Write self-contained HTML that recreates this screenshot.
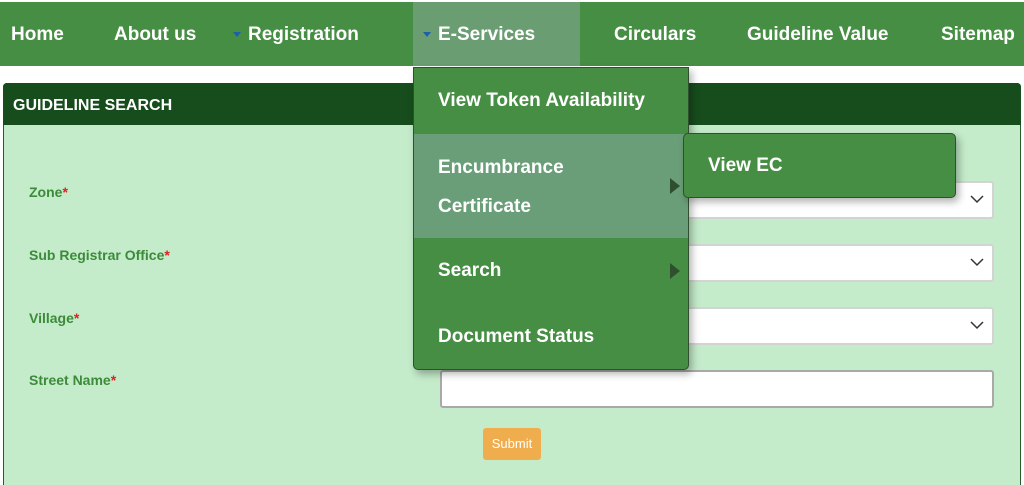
<!DOCTYPE html><html style="overflow:hidden;height:485px"><head><style>
body{margin:0;width:1024px;height:485px;overflow:hidden;background:#fff;font-family:"Liberation Sans",sans-serif;position:relative}
.a{position:absolute}
.nav{left:0;top:2px;width:1024px;height:64px;background:#468e43}
.nl{position:absolute;top:24px;color:#fff;font-weight:bold;font-size:19px}
.tri{display:inline-block;width:0;height:0;border-left:4px solid transparent;border-right:4px solid transparent;border-top:5px solid #1d5fa8;vertical-align:middle;margin-right:7px}
.lbl{position:absolute;left:29px;color:#3d8b3a;font-weight:bold;font-size:14px}
.lbl b{color:#e02020}
.sel{position:absolute;left:440px;width:550px;height:34px;background:#fff;border:2px solid #d3d3d3;border-radius:3px}
.sel svg{position:absolute;right:8px;top:12px}
.mi{position:absolute;left:0;width:274px;color:#fff;font-weight:bold;font-size:19px;box-sizing:border-box;padding-left:24px}
.arr{position:absolute;right:8px;width:0;height:0;border-top:8px solid transparent;border-bottom:8px solid transparent;border-left:10px solid #2f4f2f}
</style></head><body>
<div class="a nav"></div>
<div class="a" style="left:413px;top:2px;width:167px;height:64px;background:#6a9e72"></div>
<div class="nl" style="left:11px">Home</div>
<div class="nl" style="left:114px">About us</div>
<div class="nl" style="left:233px"><span class="tri"></span>Registration</div>
<div class="nl" style="left:423px"><span class="tri"></span>E-Services</div>
<div class="nl" style="left:614px">Circulars</div>
<div class="nl" style="left:747px">Guideline Value</div>
<div class="nl" style="left:941px">Sitemap</div>

<div class="a" style="left:3px;top:83px;width:1016px;height:402px;background:#c4ebca;border:1px solid #2a5a2a;border-bottom:none;border-radius:4px 4px 0 0"></div>
<div class="a" style="left:3px;top:83px;width:1018px;height:42px;background:#174d1d;border-radius:4px 4px 0 0"></div>
<div class="a" style="left:13px;top:97px;color:#fff;font-weight:bold;font-size:16px">GUIDELINE SEARCH</div>

<div class="lbl" style="top:184px">Zone<b>*</b></div>
<div class="lbl" style="top:247px">Sub Registrar Office<b>*</b></div>
<div class="lbl" style="top:310px">Village<b>*</b></div>
<div class="lbl" style="top:372px">Street Name<b>*</b></div>

<div class="sel" style="top:181px"><svg width="14" height="9"><path d="M1 1L7 7L13 1" fill="none" stroke="#333" stroke-width="1.5"/></svg></div>
<div class="sel" style="top:244px"><svg width="14" height="9"><path d="M1 1L7 7L13 1" fill="none" stroke="#333" stroke-width="1.5"/></svg></div>
<div class="sel" style="top:307px"><svg width="14" height="9"><path d="M1 1L7 7L13 1" fill="none" stroke="#333" stroke-width="1.5"/></svg></div>
<div class="sel" style="top:370px;border-color:#a9a9a9;height:34px"></div>
<div class="a" style="left:483px;top:428px;width:58px;height:32px;background:#f0ad4e;border-radius:3px;color:#fff;font-size:13px;text-align:center;line-height:32px">Submit</div>

<div class="a" style="left:413px;top:67px;width:274px;height:301px;background:#468e43;border:1px solid #2f4f2f;border-radius:0 0 5px 5px;box-shadow:3px 4px 8px rgba(0,0,0,.3);overflow:hidden">
<div class="mi" style="top:0;height:66px;line-height:66px">View Token Availability</div>
<div class="mi" style="top:66px;height:104px;background:#6a9e78;padding-top:14px;line-height:39px">Encumbrance<br>Certificate<div class="arr" style="top:44px"></div></div>
<div class="mi" style="top:170px;height:66px;line-height:66px">Search<div class="arr" style="top:25px"></div></div>
<div class="mi" style="top:236px;height:66px;line-height:66px">Document Status</div>
</div>
<div class="a" style="left:683px;top:133px;width:273px;height:65px;background:#468e43;border:1px solid #2f4f2f;border-radius:5px;box-shadow:3px 4px 8px rgba(0,0,0,.3);color:#fff;font-weight:bold;font-size:19px;line-height:64px;box-sizing:border-box;padding-left:24px">View EC</div>
</body></html>
